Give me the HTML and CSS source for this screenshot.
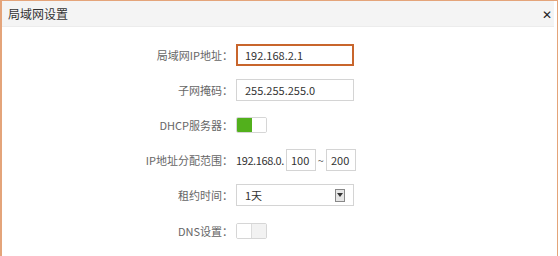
FILE: index.html
```html
<!DOCTYPE html>
<html lang="zh-CN">
<head>
	<meta charset="UTF-8">
	<title>局域网设置</title>
	<link rel="stylesheet" href="styles.css">
</head>
<body>
	<div class="dialog">
		<div class="dialog-head">
			<span class="dialog-title">局域网设置</span>
			<span class="dialog-close">&#x2715;</span>
		</div>
		<div class="form">
			<div class="row">
				<label class="label">局域网IP地址：</label>
				<div class="input input-focus">192.168.2.1</div>
			</div>
			<div class="row">
				<label class="label">子网掩码：</label>
				<div class="input">255.255.255.0</div>
			</div>
			<div class="row">
				<label class="label">DHCP服务器：</label>
				<div class="switch switch-on"><span class="switch-half"></span><span class="switch-half"></span></div>
			</div>
			<div class="row">
				<label class="label">IP地址分配范围：</label>
				<span class="prefix">192.168.0.</span>
				<div class="input input-short">100</div>
				<span class="tilde">~</span>
				<div class="input input-short">200</div>
			</div>
			<div class="row">
				<label class="label">租约时间：</label>
				<div class="input select">
					<span>1天</span>
					<span class="select-btn">
						<svg width="6" height="4" viewBox="0 0 6 4"><path d="M0 0h6L3 4z" fill="#333"/></svg>
					</span>
				</div>
			</div>
			<div class="row">
				<label class="label">DNS设置：</label>
				<div class="switch"><span class="switch-half"></span><span class="switch-half"></span></div>
			</div>
		</div>
	</div>
</body>
</html>
```

FILE: styles.css
```css
*{
	margin: 0;
	padding: 0;
	box-sizing: border-box;
}
body{
	font-family: "Noto Sans CJK SC", "Microsoft YaHei", sans-serif;
	font-size: 11px;
	color: #333;
	background: #fff;
}
.dialog{
	width: 558px;
	height: 256px;
	border: 1px solid #e4a47a;
	border-left-width: 2px;
	border-bottom: none;
	overflow: hidden;
}
.dialog-head{
	height: 26px;
	margin-right: 3px;
	padding: 0 2px 0 6px;
	background: #f4f4f4;
	border-bottom: 1px solid #ececec;
	display: flex;
	align-items: center;
	justify-content: space-between;
}
.dialog-title{
	font-size: 12px;
	color: #333;
}
.dialog-close{
	font-size: 12px;
	color: #222;
}
.form{
	padding-top: 10px;
}
.row{
	height: 35.2px;
	display: flex;
	align-items: center;
}
.label{
	width: 232px;
	padding-right: 1px;
	text-align: right;
	color: #666;
}
.input{
	width: 118px;
	height: 22px;
	margin-left: 2px;
	padding-left: 8px;
	border: 1px solid #d4d4d4;
	display: flex;
	align-items: center;
	color: #333;
}
.input-focus{
	border: 2px solid #c8652c;
	padding-left: 7px;
}
.input-short{
	width: 30px;
	padding-left: 4px;
	margin-left: 0;
}
.prefix{
	margin-left: 2px;
	margin-right: 2px;
	letter-spacing: -0.4px;
}
.tilde{
	width: 10px;
	text-align: center;
	color: #666;
}
.select{
	justify-content: space-between;
	padding-right: 8px;
}
.select-btn{
	width: 10px;
	height: 13px;
	border: 1px solid #888;
	background: #e6e6e6;
	display: flex;
	align-items: center;
	justify-content: center;
}
.switch{
	width: 31px;
	height: 16px;
	margin-left: 2px;
	border: 1px solid #d6d6d6;
	border-radius: 2px;
	display: flex;
	overflow: hidden;
}
.switch-half{
	flex: 1;
	background: #fff;
}
.switch-half + .switch-half{
	border-left: 1px solid #dcdcdc;
	background: #f2f2f2;
}
.switch-on .switch-half:first-child{
	background: #52b01c;
}
.switch-on .switch-half + .switch-half{
	background: #fff;
	border-left: none;
}
```
